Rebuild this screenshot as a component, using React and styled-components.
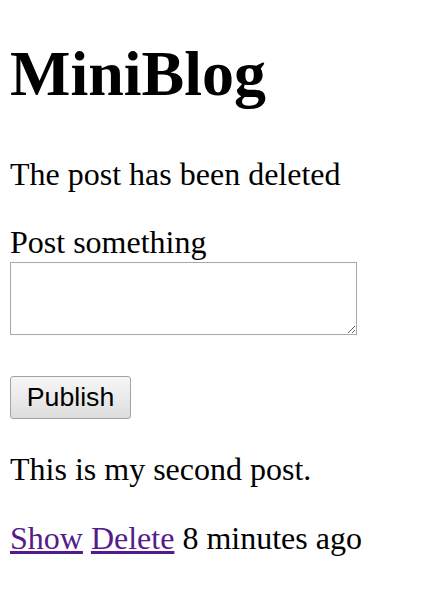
import React from "react";
import styled, { createGlobalStyle } from "styled-components";

const Global = createGlobalStyle`
  html, body { margin: 0; padding: 0; background: #fff; }
  body { font-family: "Liberation Serif", "Times New Roman", serif; font-size: 32px; color: #000; }
`;

const Page = styled.div`
  padding: 37px 10px 0;
`;

const Title = styled.h1`
  font-size: 64px;
  font-weight: bold;
  margin: 0 0 45px;
  line-height: 73.6px;
`;

const Para = styled.p`
  margin: ${(p) => p.$top ?? 32}px 0 0;
  line-height: 36.8px;
`;

const Form = styled.form`
  margin-top: 32px;
  display: flex;
  flex-direction: column;
  align-items: flex-start;
`;

const Label = styled.label`
  display: block;
  line-height: 36.8px;
`;

const TextArea = styled.textarea`
  display: block;
  box-sizing: border-box;
  width: 347px;
  height: 73px;
  margin: 1px 0 0;
  border: 1px solid #a9a9a9;
  font-family: "Liberation Mono", monospace;
  font-size: 26px;
`;

const Button = styled.button`
  box-sizing: border-box;
  width: 121px;
  height: 43px;
  margin-top: 41px;
  padding: 0;
  display: flex;
  align-items: center;
  justify-content: center;
  font-family: "Liberation Sans", Arial, sans-serif;
  font-size: 26.67px;
  color: #000;
  border: 1px solid #a3a3a3;
  border-radius: 3px;
  background: linear-gradient(#f7f7f7, #dddddd);
`;

const Link = styled.a`
  color: #551a8b;
  text-decoration: underline;
`;

export default function App() {
  return (
    <>
      <Global />
      <Page>
        <Title>MiniBlog</Title>
        <Para $top={0}>The post has been deleted</Para>
        <Form onSubmit={(e) => e.preventDefault()}>
          <Label htmlFor="post">Post something</Label>
          <TextArea id="post" />
          <Button type="submit">Publish</Button>
        </Form>
        <Para $top={32}>This is my second post.</Para>
        <Para>
          <Link href="#show">Show</Link> <Link href="#delete">Delete</Link> 8 minutes ago
        </Para>
      </Page>
    </>
  );
}
